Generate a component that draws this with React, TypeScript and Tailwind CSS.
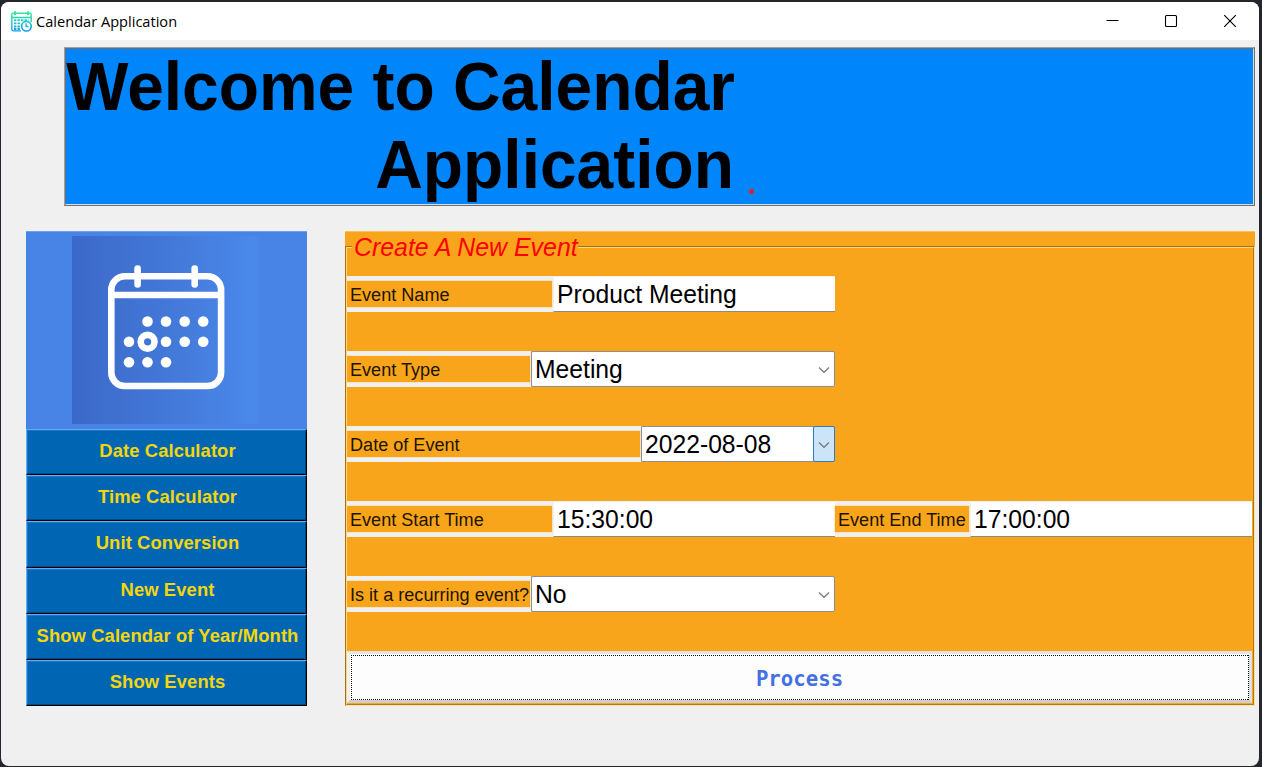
import React from "react";

const sans = "font-['Liberation_Sans',Arial,sans-serif]";

function AppIcon() {
  return (
    <svg width="21" height="21" viewBox="0 0 21 21" fill="none">
      <defs>
        <linearGradient id="ic" x1="0" y1="0" x2="0" y2="21" gradientUnits="userSpaceOnUse">
          <stop offset="0" stopColor="#35ee96" />
          <stop offset="0.5" stopColor="#22c8c4" />
          <stop offset="1" stopColor="#1496f2" />
        </linearGradient>
      </defs>
      <g stroke="url(#ic)" strokeWidth="1.4">
        <path d="M10 19.9H2.6a1.8 1.8 0 0 1-1.8-1.8V3.6a1.4 1.4 0 0 1 1.4-1.4h16.6a1.4 1.4 0 0 1 1.4 1.4V11" />
        <path d="M.8 6.5h19.4" strokeWidth="1.4" />
        <path d="M4 .3v3.8M17 .3v3.8" strokeWidth="2" />
        <circle cx="15.4" cy="15.2" r="4.8" strokeWidth="1.7" />
        <path d="M15.1 12.3v3.2h2.4" />
      </g>
      <path
        d="M3 9.3h14.5M3 12.4h7M3 15.5h6M3 18h6"
        stroke="url(#ic)"
        strokeWidth="1.9"
        strokeDasharray="2.4 1.1"
      />
    </svg>
  );
}

function TitleBar() {
  return (
    <div className="flex h-[38px] shrink-0 items-center bg-white pl-[10px]">
      <AppIcon />
      <span className="-mt-px ml-[4px] font-['Open_Sans','Noto_Sans',sans-serif] text-[14.6px] leading-[20px] whitespace-nowrap text-black">
        Calendar Application
      </span>
      <div className="mr-[22px] ml-auto flex items-center gap-[45px]">
        <svg width="14" height="14" viewBox="0 0 14 14" stroke="#000" fill="none">
          <path d="M1.5 6.5h12" />
        </svg>
        <svg width="14" height="14" viewBox="0 0 14 14" stroke="#000" fill="none">
          <rect x="1.5" y="1.5" width="11" height="11" rx="1" strokeWidth="1.1" />
        </svg>
        <svg width="14" height="14" viewBox="0 0 14 14" stroke="#000" fill="none">
          <path d="M1.2 1.2l11.6 11.6M12.8 1.2L1.2 12.8" strokeWidth="1.15" />
        </svg>
      </div>
    </div>
  );
}

function Banner() {
  return (
    <div className="ml-[63px] h-[159px] w-[1191px] border border-t-[#a0a0a0] border-l-[#a0a0a0] border-r-[#6f6f6f] border-b-[#6f6f6f]">
      <div className="flex h-full items-start border border-t-[#5f7180] border-l-[#5f7180] border-r-[#d5dde4] border-b-[#d5dde4] bg-[#0085fa]">
        <h1 className="-mt-px w-[669px] origin-top scale-y-[1.04] text-right text-[65.9px] leading-[74.5px] font-bold text-black">
          <span className="block whitespace-nowrap">Welcome to Calendar</span>
          <span className="block pr-px whitespace-nowrap">Application</span>
        </h1>
        <span className="mt-[139.5px] ml-[14px] size-[5px] rounded-full bg-[#e81c24]" />
      </div>
    </div>
  );
}

const dots = [
  [147.5, 321.5], [166, 321.5], [184.7, 321.5], [203.2, 321.5],
  [129, 341.7], [166, 341.7], [184.7, 341.7], [203.2, 341.7],
  [129, 362.2], [147.5, 362.2], [166, 362.2],
];

function CalendarArt() {
  return (
    <div className="flex h-[198px] justify-center border-t border-[#6ba3f2] bg-[#4884e6] pt-[4px]">
      <svg width="189" height="188" viewBox="72 236 189 188" fill="none">
        <defs>
          <linearGradient id="bg">
            <stop offset="0" stopColor="#3c69c9" />
            <stop offset="0.5" stopColor="#4378d8" />
            <stop offset="0.97" stopColor="#4a89ea" />
            <stop offset="1" stopColor="#4884e6" />
          </linearGradient>
        </defs>
        <rect x="72" y="236" width="189" height="188" fill="url(#bg)" />
        <g stroke="#fff" strokeWidth="6.6" strokeLinecap="round">
          <rect x="111.3" y="276.3" width="109.8" height="109.7" rx="13.5" />
          <path d="M112 295h108" />
          <path d="M137.6 268.5v16M194.7 268.5v16" />
          <circle cx="147.6" cy="341.8" r="6.9" />
        </g>
        {dots.map(([x, y]) => (
          <circle key={`${x}-${y}`} cx={x} cy={y} r="5.3" fill="#fff" />
        ))}
      </svg>
    </div>
  );
}

const actions = [
  "Date Calculator",
  "Time Calculator",
  "Unit Conversion",
  "New Event",
  "Show Calendar of Year/Month",
  "Show Events",
];

function Sidebar() {
  return (
    <nav className="flex h-[475px] w-[281px] flex-col">
      <CalendarArt />
      {actions.map((a) => (
        <button
          key={a}
          className="min-h-0 flex-1 border border-t-[#69a8f5] border-l-[#69a8f5] border-r-black border-b-black bg-[#0066b4] pb-[2px] pl-[2px] shadow-[inset_-1px_-1px_0_#004a84,inset_1px_1px_0_#1b78c4]"
        >
          <span className="block text-[18.4px] leading-[22px] font-bold tracking-[0.1px] whitespace-nowrap text-[#f5d60a]">
            {a}
          </span>
        </button>
      ))}
    </nav>
  );
}

function Label({ text, className }: { text: string; className: string }) {
  return (
    <div className={`h-[36px] bg-[#f0f0f0] pt-[5px] pr-px ${className}`}>
      <div className="h-[26px] bg-[#f9a51b] pl-[3px] shadow-[0_0_0_0.5px_#f9d69a]">
        <span className="block origin-center scale-y-[1.04] text-[18.1px] leading-[28px] whitespace-nowrap text-[#1c1400]">
          {text}
        </span>
      </div>
    </div>
  );
}

function Entry({ value }: { value: string }) {
  return (
    <div className="h-[36px] w-[282px] border-t border-b border-l border-t-[#f3f3f3] border-b-[#8a8a8a] border-l-[#f0f0f0] bg-white pl-[3px]">
      <span className="block scale-y-[1.05] text-[24.7px] leading-[35px] whitespace-nowrap text-black">{value}</span>
    </div>
  );
}

function Combo({ value, active, className }: { value: string; active?: boolean; className: string }) {
  return (
    <div className={`flex h-[36px] rounded-[2px] border border-[#8f8f8f] bg-white ${className}`}>
      <span className="block flex-1 scale-y-[1.05] pl-[3px] text-[24.7px] leading-[35px] whitespace-nowrap text-black">
        {value}
      </span>
      <span
        className={
          active
            ? "-my-px -mr-px flex w-[22px] items-center justify-center rounded-[2px] border border-[#2a7cc8] bg-[#cce4f7] pt-px pr-px"
            : "-mr-px flex w-[22px] items-center justify-center pt-px pr-px"
        }
      >
        <svg width="12" height="8" viewBox="0 0 12 8" fill="none" stroke="#7a7a7a" strokeWidth="1.2">
          <path d="M1 1.5L6 6.3L11 1.5" />
        </svg>
      </span>
    </div>
  );
}

function EventForm() {
  return (
    <section className="relative h-[475px] w-[910px] bg-[#f9a51b] pt-[45px] pr-[3px] pl-[2px] shadow-[inset_0_1px_0_#fbc05c]">
      <div className="absolute inset-x-0 top-[15px] bottom-0 border border-t-[#a8700f] border-r-[#fbe0a0] border-b-[#fbe0a0] border-l-[#a8700f]">
        <div className="h-full border border-t-[#fcd680] border-r-[#b07a1c] border-b-[#b07a1c] border-l-[#fcd680]" />
      </div>
      <h2 className="absolute top-[1px] left-[7px] h-[30px] bg-[#f9a51b] pl-[2px] text-[24.9px] leading-[30px] whitespace-nowrap text-[#fe0000] italic">
        <span className="block scale-y-[1.05]">Create A New Event</span>
      </h2>
      <div className="relative flex flex-col gap-[39px]">
        <div className="flex">
          <Label text="Event Name" className="w-[206px]" />
          <Entry value="Product Meeting" />
        </div>
        <div className="flex">
          <Label text="Event Type" className="w-[184px]" />
          <Combo value="Meeting" className="w-[304px]" />
        </div>
        <div className="flex">
          <Label text="Date of Event" className="w-[294px]" />
          <Combo value="2022-08-08" active className="w-[194px]" />
        </div>
        <div className="flex">
          <Label text="Event Start Time" className="w-[206px]" />
          <Entry value="15:30:00" />
          <Label text="Event End Time" className="w-[135px]" />
          <Entry value="17:00:00" />
        </div>
        <div className="flex">
          <Label text="Is it a recurring event?" className="w-[184px]" />
          <Combo value="No" className="w-[304px]" />
        </div>
        <button className="flex h-[52px] w-[905px] border-[3px] border-t-[#e3e3e3] border-r-[#e0e0e0] border-b-[#cfcfcf] border-l-[#f0f0f0] bg-[#fdfdfd]">
          <span className="relative flex flex-1 items-center justify-center self-stretch">
            <svg
              className="absolute inset-0"
              width="899"
              height="46"
              fill="none"
              stroke="#111"
              strokeDasharray="1 1"
              shapeRendering="crispEdges"
            >
              <path d="M1 1.5H899M1 45.5H899M1.5 1V46M898.5 1V46" />
            </svg>
            <span className="pt-[4px] font-['DejaVu_Sans_Mono',monospace] text-[20.7px] leading-[24px] font-bold text-[#4470e2]">
              Process
            </span>
          </span>
        </button>
      </div>
    </section>
  );
}

export default function App() {
  return (
    <div className={`h-[767px] w-[1262px] overflow-hidden bg-[#24262e] pt-[2px] pl-px ${sans}`}>
      <div className="flex h-[764px] w-[1258px] flex-col overflow-hidden rounded-[8px] bg-[#f0f0f0]">
        <TitleBar />
        <main className="flex flex-col pt-[7px]">
          <Banner />
          <div className="mt-[25px] ml-[25px] flex gap-[38px]">
            <Sidebar />
            <EventForm />
          </div>
        </main>
      </div>
    </div>
  );
}
